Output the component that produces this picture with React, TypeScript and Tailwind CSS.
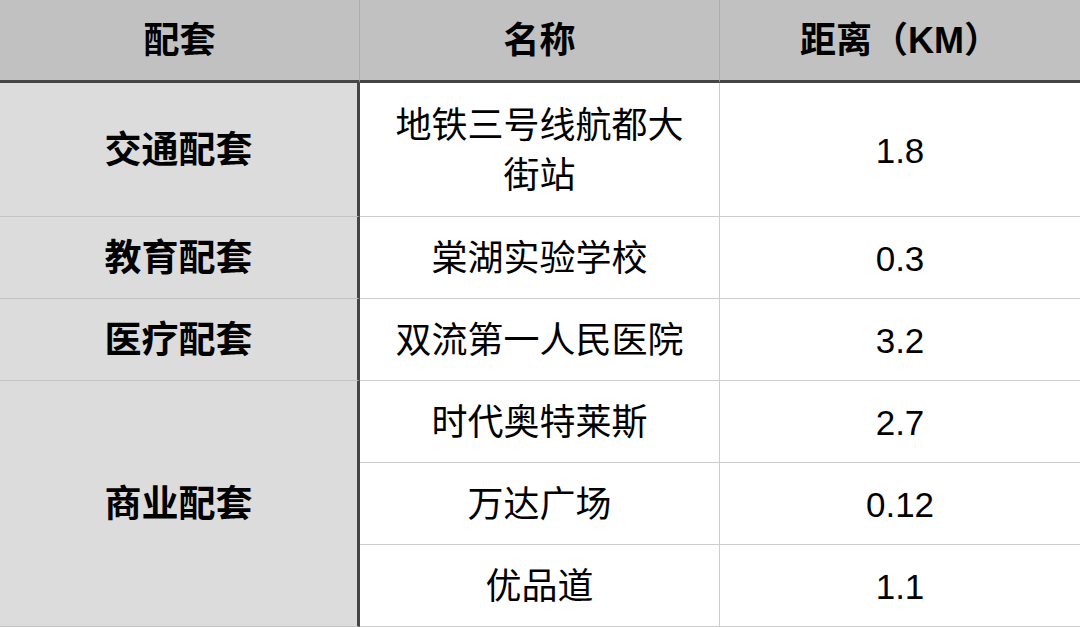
import React from "react";

const font = { fontFamily: '"Liberation Sans", "Noto Sans CJK SC", sans-serif' };

export default function App() {
  const h = "flex items-center justify-center bg-[#c1c1c1] border-b-[3px] border-b-[#454545] text-[36px] font-bold text-black pt-[2px]";
  const c1 = "flex items-center justify-center bg-[#dcdcdc] border-r-[3px] border-r-[#454545] border-b border-b-[#c4c4c4] text-[37px] font-bold text-black pt-[3px]";
  const c2 = "flex items-center justify-center bg-white border-r border-r-[#cdcdcd] border-b border-b-[#cdcdcd] text-[36px] text-black text-center leading-[1.4] px-[30px] pt-[3px]";
  const c3 = "flex items-center justify-center bg-white border-b border-b-[#cdcdcd] text-[35px] text-black pt-[3px]";
  return (
    <div style={font} className="w-[1080px] h-[627px] overflow-hidden bg-white">
      <div className="grid grid-cols-[360px_360px_360px] grid-rows-[83px_134px_82px_82px_82px_82px_82px]">
        <div className={h + " border-r border-r-[#adadad]"}>配套</div>
        <div className={h + " border-r border-r-[#adadad]"}>名称</div>
        <div className={h}>距离（KM）</div>

        <div className={c1}>交通配套</div>
        <div className={c2}>地铁三号线航都大街站</div>
        <div className={c3}>1.8</div>

        <div className={c1}>教育配套</div>
        <div className={c2}>棠湖实验学校</div>
        <div className={c3}>0.3</div>

        <div className={c1}>医疗配套</div>
        <div className={c2}>双流第一人民医院</div>
        <div className={c3}>3.2</div>

        <div className={c1 + " row-span-3"}>商业配套</div>
        <div className={c2}>时代奥特莱斯</div>
        <div className={c3}>2.7</div>

        <div className={c2}>万达广场</div>
        <div className={c3}>0.12</div>

        <div className={c2}>优品道</div>
        <div className={c3}>1.1</div>
      </div>
    </div>
  );
}
